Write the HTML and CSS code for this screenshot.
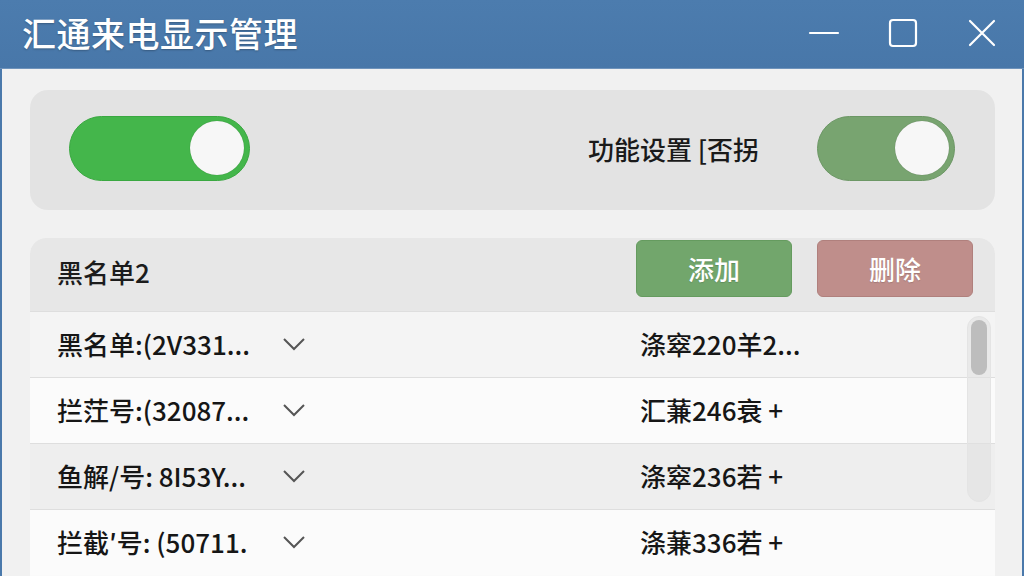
FILE: index.html
```html
<!DOCTYPE html>
<html lang="zh">
<head>
<meta charset="utf-8">
<title>汇通来电显示管理</title>
<link rel="stylesheet" href="styles.css">
</head>
<body>
<div class="window">
  <header class="titlebar">
    <h1 class="title">汇通来电显示管理</h1>
    <div class="controls">
      <svg class="ctl" width="32" height="32" viewBox="0 0 32 32"><path d="M2 16 H30" stroke="#fff" stroke-width="2.2" fill="none" stroke-linecap="round"/></svg>
      <svg class="ctl" width="32" height="32" viewBox="0 0 32 32"><rect x="3" y="3" width="26" height="26" rx="3" stroke="#fff" stroke-width="2.2" fill="none"/></svg>
      <svg class="ctl" width="32" height="32" viewBox="0 0 32 32"><path d="M4 4 L28 28 M28 4 L4 28" stroke="#fff" stroke-width="2.2" fill="none" stroke-linecap="round"/></svg>
    </div>
  </header>
  <main class="content">
    <section class="settings">
      <div class="toggle toggle-main"><span class="knob"></span></div>
      <div class="setting-right">
        <span class="setting-label">功能设置 [否拐</span>
        <div class="toggle toggle-sub"><span class="knob"></span></div>
      </div>
    </section>
    <section class="list">
      <div class="list-head">
        <span class="list-title">黑名单2</span>
        <div class="actions">
          <button class="btn btn-add">添加</button>
          <button class="btn btn-del">删除</button>
        </div>
      </div>
      <div class="rows">
        <div class="row row-a">
          <div class="cell-left"><span class="name">黑名单:(2V331...</span><svg class="chev" width="24" height="14" viewBox="0 0 24 14"><path d="M2 2 L12 12 L22 2" stroke="#555" stroke-width="2" fill="none"/></svg></div>
          <div class="cell-right">涤窣220羊2...</div>
        </div>
        <div class="row row-b">
          <div class="cell-left"><span class="name">拦茳号:(32087...</span><svg class="chev" width="24" height="14" viewBox="0 0 24 14"><path d="M2 2 L12 12 L22 2" stroke="#555" stroke-width="2" fill="none"/></svg></div>
          <div class="cell-right">汇蒹246衰 +</div>
        </div>
        <div class="row row-c">
          <div class="cell-left"><span class="name">鱼解/号: 8I53Y...</span><svg class="chev" width="24" height="14" viewBox="0 0 24 14"><path d="M2 2 L12 12 L22 2" stroke="#555" stroke-width="2" fill="none"/></svg></div>
          <div class="cell-right">涤窣236若 +</div>
        </div>
        <div class="row row-b">
          <div class="cell-left"><span class="name">拦截′号: (50711.</span><svg class="chev" width="24" height="14" viewBox="0 0 24 14"><path d="M2 2 L12 12 L22 2" stroke="#555" stroke-width="2" fill="none"/></svg></div>
          <div class="cell-right">涤蒹336若 +</div>
        </div>
        <div class="scrollbar"><div class="thumb"></div></div>
      </div>
    </section>
  </main>
</div>
</body>
</html>
```
FILE: styles.css
```css
* { box-sizing: border-box; }
html, body { margin: 0; padding: 0; }
body {
  width: 1024px;
  height: 576px;
  overflow: hidden;
  background: #4a79ab;
  font-family: "Noto Sans CJK SC", "Noto Sans", sans-serif;
  color: #1c1c1c;
}
.window {
  width: 1024px;
  height: 576px;
  display: flex;
  flex-direction: column;
}
.titlebar {
  height: 69px;
  flex: none;
  background: linear-gradient(#4c7cae, #4877a9);
  display: flex;
  align-items: center;
  justify-content: space-between;
  padding: 0 26px 0 22px;
  border-bottom: 1px solid #6f93bb;
}
.title {
  margin: 0;
  font-size: 34px;
  font-weight: 500;
  color: #fff;
  letter-spacing: 0.5px;
  text-shadow: 0 1px 2px rgba(0,0,0,0.25);
  line-height: 1;
  margin-top: -2px;
}
.controls {
  display: flex;
  gap: 47px;
  align-items: center;
  margin-top: -2px;
}
.ctl { display: block; }
.content {
  flex: 1;
  margin: 0 2px;
  background: #f1f1f1;
  padding: 21px 27px 0 28px;
  display: flex;
  flex-direction: column;
  gap: 28px;
  overflow: hidden;
}
.settings {
  height: 120px;
  flex: none;
  background: #e3e3e3;
  border-radius: 18px;
  display: flex;
  align-items: center;
  justify-content: space-between;
  padding: 0 40px 4px 39px;
}
.toggle {
  height: 65px;
  border-radius: 33px;
  display: flex;
  align-items: center;
  justify-content: flex-end;
  padding-right: 5px;
}
.toggle-main {
  width: 181px;
  background: #44b64b;
  border: 1px solid #3aa841;
}
.toggle-sub {
  width: 138px;
  background: #78a470;
  border: 1px solid #6c9765;
}
.knob {
  width: 54px;
  height: 54px;
  border-radius: 50%;
  background: #f7f7f7;
  box-shadow: 0 0 1px rgba(0,0,0,0.3);
}
.setting-right {
  display: flex;
  align-items: center;
  gap: 58px;
}
.setting-label {
  font-size: 26px;
  font-weight: 500;
  color: #1a1a1a;
  white-space: nowrap;
}
.list {
  flex: 1;
  background: #fafafa;
  border-radius: 16px 16px 0 0;
  display: flex;
  flex-direction: column;
  overflow: hidden;
}
.list-head {
  height: 73px;
  flex: none;
  background: #e7e7e7;
  display: flex;
  justify-content: space-between;
  padding: 2px 22px 0 27px;
}
.list-title {
  font-size: 26px;
  font-weight: 500;
  line-height: 64px;
}
.actions {
  display: flex;
  gap: 25px;
  align-items: flex-start;
}
.btn {
  width: 156px;
  height: 57px;
  border-radius: 6px;
  font-family: inherit;
  font-size: 26px;
  font-weight: 500;
  color: #fff;
  padding: 0;
  text-shadow: 0 1px 1px rgba(0,0,0,0.15);
}
.btn-add {
  background: #72a66c;
  border: 1px solid #659b5f;
}
.btn-del {
  background: #bf8e8b;
  border: 1px solid #b0807d;
}
.rows {
  position: relative;
  flex: 1;
}
.row {
  height: 66px;
  display: grid;
  grid-template-columns: 583px 1fr;
  align-items: center;
  padding-left: 27px;
  padding-bottom: 3px;
  border-top: 1px solid #dedede;
  font-size: 26px;
  font-weight: 500;
  color: #161616;
}
.row-a { background: #f4f4f4; }
.row-b { background: #fbfbfb; }
.row-c { background: #eeeeee; }
.cell-left {
  display: flex;
  align-items: center;
  white-space: nowrap;
}
.name {
  width: 225px;
  overflow: hidden;
}
.chev { display: block; margin-top: 2px; }
.cell-right { white-space: nowrap; }
.scrollbar {
  position: absolute;
  left: 937px;
  top: 5px;
  width: 24px;
  height: 186px;
  border-radius: 12px;
  background: rgba(225,225,225,0.6);
  border: 1px solid #e4e4e4;
  padding: 3px 3px;
}
.thumb {
  height: 55px;
  border-radius: 9px;
  background: #bdbdbd;
}
```
